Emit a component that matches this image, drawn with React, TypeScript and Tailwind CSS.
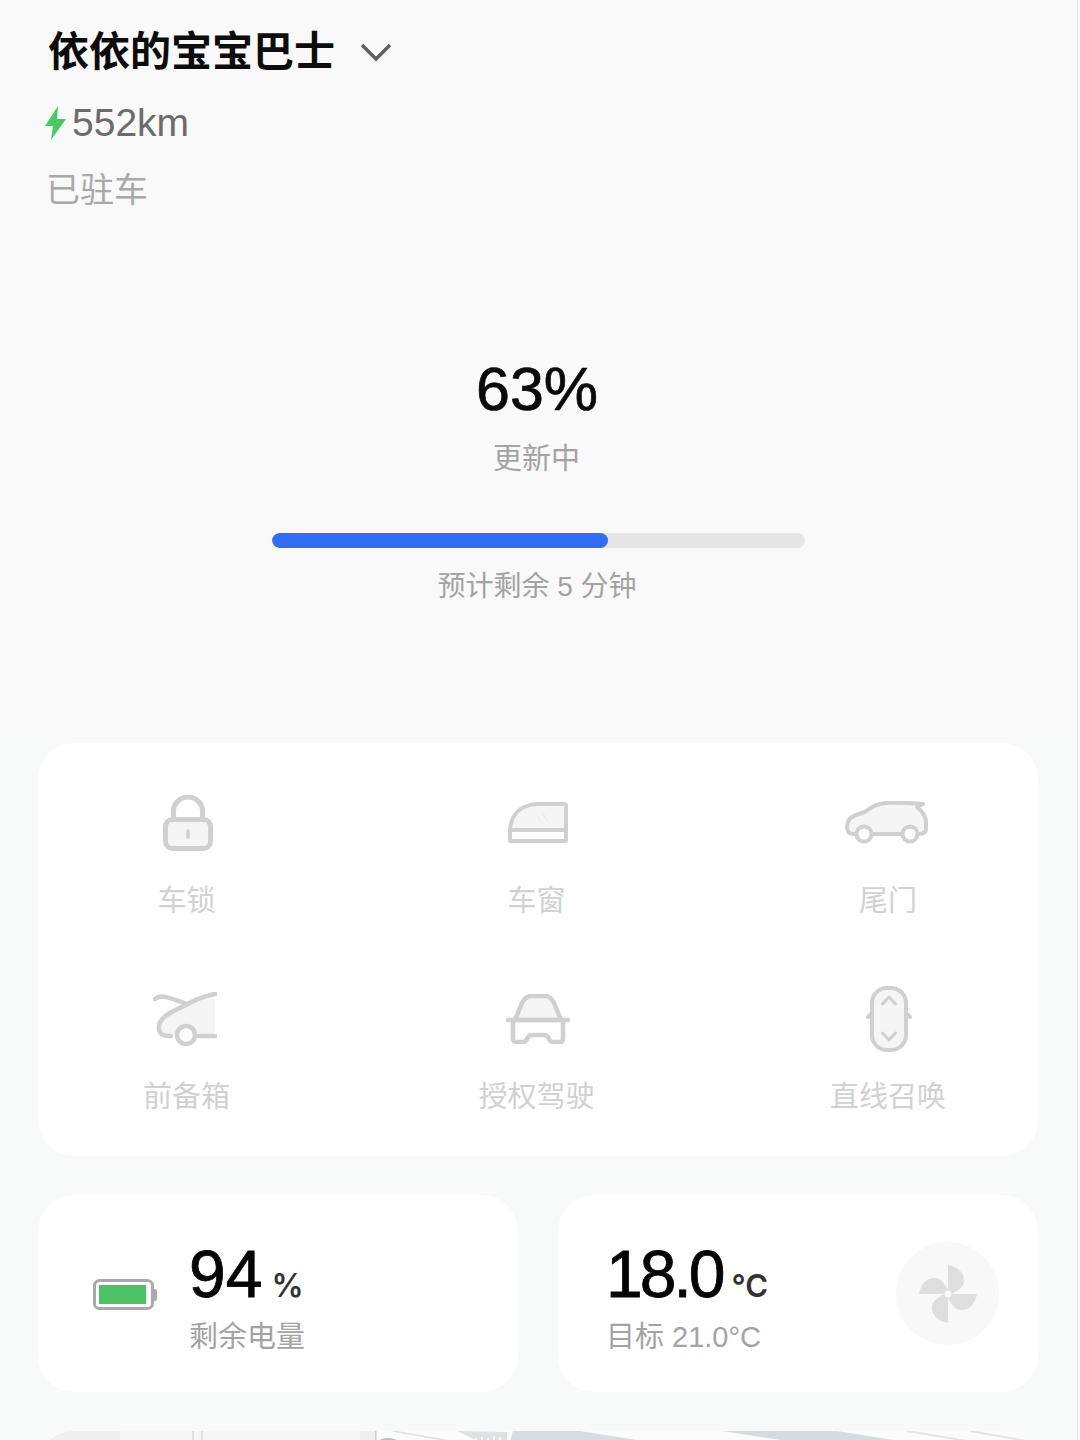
import React from "react";

const FONT = "font-['Liberation_Sans','Noto_Sans_CJK_SC',sans-serif]";
const S = "#cfd0d1";
const F = "#f5f5f6";

function Lock() {
  return (
    <svg width="50" height="56" viewBox="0 0 50 56" fill="none" stroke={S} strokeWidth="5">
      <rect x="2.500" y="24.500" width="45" height="29" rx="7" fill={F} />
      <path d="M10.500 24V16a14.500 14 0 0 1 29 0v8" />
      <path d="M25 36v6" strokeWidth="3.500" strokeLinecap="round" />
    </svg>
  );
}
function WindowIcon() {
  return (
    <svg width="60" height="42" viewBox="0 0 60 42" fill="none" stroke={S} strokeWidth="4">
      <path d="M2 28C3 12 13 3 29 2h27a2 2 0 0 1 2 2v24z" fill={F} />
      <path d="M2 28h56v11H2z" strokeLinejoin="round" />
      <path d="M30 14l3 7M35 11l4 8" stroke="#e9e9ea" strokeWidth="1" />
    </svg>
  );
}
function Tail() {
  return (
    <svg className="-ml-[3px]" width="84" height="44" viewBox="0 0 84 44" fill="none" stroke={S} strokeWidth="4">
      <path d="M12 33H8c-4 0-6-3-6-7 0-6 3-10 9-12l9-3c6-5 12-8 20-9 13-1 26 0 38 1-2 1-4 2-6 3 5 4 9 9 9 15v7c0 4-3 5-7 5h-2M28 33h28" fill={F} strokeLinejoin="round" />
      <circle cx="19" cy="33" r="7.500" fill="#fff" />
      <circle cx="65" cy="33" r="7.500" fill="#fff" />
    </svg>
  );
}
function Frunk() {
  return (
    <svg className="-ml-[6px]" width="64" height="54" viewBox="0 0 64 54" fill="none" stroke={S} strokeLinecap="round">
      <path d="M62 6v38H44c-4-8-14-8-18 0H14C8 44 5 40 6 33c1-8 12-15 24-21z" fill={F} stroke="none" />
      <path d="M2 7c6-5 13-2 32 5" strokeWidth="4.500" />
      <path d="M62 2c-10 2-21 6-31 12C18 20 7 25 6 34c-1 6 2 9 8 10h4" strokeWidth="4.500" />
      <path d="M46 44h16" strokeWidth="4.500" />
      <circle cx="33" cy="43" r="9" fill="#fff" strokeWidth="4.500" />
    </svg>
  );
}
function Drive() {
  return (
    <svg width="64" height="50" viewBox="0 0 64 50" fill="none" stroke={S} strokeWidth="4.500">
      <path d="M9 26l7-17c2-4 5-7 9-7h14c4 0 7 3 9 7l7 17z" fill={F} strokeLinejoin="round" />
      <path d="M2 26h60" strokeLinecap="round" />
      <path d="M7 26v18c0 3 1 4 3 4h7c2 0 3-1 4-3 1-3 3-4 5-4h12c2 0 4 1 5 4 1 2 2 3 4 3h7c2 0 3-1 3-4V26" strokeLinejoin="round" />
    </svg>
  );
}
function Summon() {
  return (
    <svg className="ml-[2px]" width="46" height="66" viewBox="0 0 46 66" fill="none" stroke={S} strokeWidth="4">
      <path d="M6 27l-4 4M40 27l4 4" strokeWidth="4" strokeLinecap="round" />
      <rect x="6" y="2" width="34" height="62" rx="15" fill={F} />
      <path d="M16.500 18l6.500-7 6.500 7M16.500 47l6.500 7 6.500-7" strokeWidth="3" strokeLinecap="round" strokeLinejoin="round" />
    </svg>
  );
}
function Fan() {
  const blade = "M30 30V1C41 3 47 10 46 18C45 24 39 27 34 30z";
  return (
    <svg width="60" height="60" viewBox="0 0 60 60" fill="#dedede">
      <path d={blade} />
      <path d={blade} transform="rotate(90 30 30)" />
      <path d={blade} transform="rotate(180 30 30)" />
      <path d={blade} transform="rotate(270 30 30)" />
      <circle cx="30" cy="30" r="3.500" fill="#f8f8f8" />
    </svg>
  );
}
function MapStrip() {
  return (
    <svg width="1000" height="10" viewBox="38 1430 1000 10" className="block">
      <rect x="38" y="1430" width="82" height="10" fill="#eeefee" />
      <path d="M193 1430v10M202 1430v10" stroke="#d8d8d8" strokeWidth="1.500" />
      <rect x="360" y="1430" width="15" height="10" fill="#efefef" />
      <rect x="375" y="1430" width="1.500" height="10" fill="#d0d0d0" />
      <rect x="377" y="1430" width="661" height="10" fill="#fcfcfc" />
      <ellipse cx="388" cy="1441" rx="10" ry="4" fill="#b8c0c8" />
      <path d="M393 1430L450 1440" stroke="#dcdfe2" strokeWidth="1.500" />
      <path d="M457 1430L507 1431V1440H478z" fill="#dfe2e5" />
      <path d="M476 1440v-3M482 1440v-4M488 1440v-3M494 1440v-5M500 1440v-4" stroke="#ffffff" strokeWidth="1.500" />
      <path d="M513 1430H580L643 1440H510z" fill="#d5dce2" />
      <path d="M722 1430H837L900 1440H787z" fill="#d5dce0" />
      <path d="M907 1430L967 1440M970 1430L1027 1440" stroke="#e2e4e6" strokeWidth="2" />
    </svg>
  );
}

function Control({ icon, label, shifted }: { icon: React.ReactNode; label: string; shifted?: boolean }) {
  return (
    <div className="flex flex-col items-center">
      <div className="h-[68px] flex items-center justify-center">{icon}</div>
      <div className={shifted ? "mt-[24px] pr-[3px] text-[29px] leading-[40px] text-[#d0d1d2]" : "mt-[24px] text-[29px] leading-[40px] text-[#d0d1d2]"}>{label}</div>
    </div>
  );
}

export default function App() {
  return (
    <div className={`${FONT} w-[1080px] h-[1440px] overflow-hidden bg-[#fafafa] flex`}>
      <div className="w-[1078px] shrink-0 border-r border-[#e8e8e8] bg-[#f8f9f9] flex flex-col">
        <div className="h-[724px] shrink-0 bg-[#f9f9f9] flex flex-col">
          <div className="pl-[48px] pt-[27px]">
            <div className="flex items-center h-[50px]">
              <span className="text-[41px] leading-[50px] font-bold text-[#0c0c0c]">依依的宝宝巴士</span>
              <svg className="ml-[25px]" width="32" height="20" viewBox="0 0 32 20" fill="none" stroke="#606060" strokeWidth="3.500">
                <path d="M2 3l14 14L30 3" />
              </svg>
            </div>
            <div className="flex items-center mt-[21px] h-[50px] -ml-[3px]">
              <svg width="21" height="34" viewBox="0 0 21 34" fill="#4cc764">
                <path d="M13 0L0 20h8L6 34l15-21h-9z" />
              </svg>
              <span className="ml-[6px] text-[39px] leading-[50px] text-[#6b6b6b]">552km</span>
            </div>
            <div className="mt-[20px] -ml-[2px] text-[34px] leading-[44px] text-[#a9a9a9]">已驻车</div>
          </div>
          <div className="mt-[141px] flex flex-col items-center">
            <div className="text-[61px] leading-[72px] pr-[3px] [-webkit-text-stroke:0.7px_#0a0a0a] text-[#0a0a0a]">63%</div>
            <div className="mt-[14px] pr-[4px] text-[29px] leading-[40px] text-[#a3a3a3]">更新中</div>
            <div className="mt-[54px] w-[533px] h-[15px] rounded-full bg-[#e5e5e5] overflow-hidden">
              <div className="w-[336px] h-full rounded-full bg-[#336df6]" />
            </div>
            <div className="mt-[19px] pr-[3px] text-[28px] leading-[40px] text-[#a3a3a3] whitespace-pre">预计剩余 5 分钟</div>
          </div>
        </div>

        <div className="pl-[38px] pr-[39px] pt-[19px] flex flex-col gap-[39px]">
          <div className="h-[413px] rounded-[36px] bg-white grid grid-cols-3 gap-x-[50px] gap-y-[64px] pt-[46px] content-start">
            <Control shifted icon={<Lock />} label="车锁" />
            <Control shifted icon={<WindowIcon />} label="车窗" />
            <Control icon={<Tail />} label="尾门" />
            <Control shifted icon={<Frunk />} label="前备箱" />
            <Control shifted icon={<Drive />} label="授权驾驶" />
            <Control icon={<Summon />} label="直线召唤" />
          </div>

          <div className="grid grid-cols-2 gap-[40px]">
            <div className="h-[197px] rounded-[36px] bg-white flex items-center pl-[55px]">
              <svg width="64" height="32" viewBox="0 0 64 32" fill="none" className="mt-[3px]">
                <rect x="1.500" y="1.500" width="58" height="28" rx="5" stroke="#a9a9a9" strokeWidth="3" fill="#fff" />
                <rect x="6" y="6" width="47" height="19" fill="#4cc264" />
                <path d="M61 10h1a2 2 0 0 1 2 2v8a2 2 0 0 1-2 2h-1z" fill="#a9a9a9" />
              </svg>
              <div className="ml-[32px] flex flex-col mt-[10px]">
                <div className="flex items-baseline h-[70px]">
                  <span className="text-[66px] leading-[66px] [-webkit-text-stroke:0.8px_#050505] text-[#050505]">94</span>
                  <span className="ml-[9px] font-['Inter'] text-[32px] font-semibold text-[#333333]">%</span>
                </div>
                <div className="mt-[6px] text-[29px] leading-[40px] text-[#a3a3a3]">剩余电量</div>
              </div>
            </div>
            <div className="h-[197px] rounded-[36px] bg-white flex items-center pl-[48px] pr-[39px] justify-between">
              <div className="flex flex-col mt-[10px]">
                <div className="flex items-baseline h-[70px]">
                  <span className="text-[66px] leading-[66px] tracking-[-3px] [-webkit-text-stroke:0.8px_#050505] text-[#050505]">18.0</span>
                  <span className="ml-[9px] font-['Inter'] text-[31px] font-semibold text-[#333333]">°C</span>
                </div>
                <div className="mt-[6px] text-[29px] leading-[40px] text-[#a3a3a3] whitespace-pre">目标 21.0°C</div>
              </div>
              <div className="w-[103px] h-[103px] rounded-full bg-[#f8f8f8] flex items-center justify-center">
                <Fan />
              </div>
            </div>
          </div>

          <div className="h-[60px] rounded-t-[36px] bg-[#f6f6f6] overflow-hidden">
            <MapStrip />
          </div>
        </div>
      </div>
    </div>
  );
}
